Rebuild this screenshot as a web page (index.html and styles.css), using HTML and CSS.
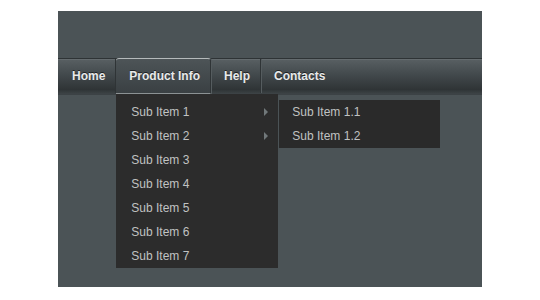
FILE: index.html
```html
<!DOCTYPE html>
<html lang="en">
<head>
    <meta charset="UTF-8">
    <title>Dropdown Menu</title>
    <link rel="stylesheet" href="styles.css">
</head>
<body>
    <div class="panel">
        <div class="top"></div>
        <ul class="nav">
            <li class="nav-item first"><a href="#">Home</a></li>
            <li class="nav-item active">
                <a href="#">Product Info</a>
                <ul class="sub">
                    <li class="has-sub">
                        <a href="#">Sub Item 1</a>
                        <ul class="sub sub-2">
                            <li><a href="#">Sub Item 1.1</a></li>
                            <li><a href="#">Sub Item 1.2</a></li>
                        </ul>
                    </li>
                    <li class="has-sub"><a href="#">Sub Item 2</a></li>
                    <li><a href="#">Sub Item 3</a></li>
                    <li><a href="#">Sub Item 4</a></li>
                    <li><a href="#">Sub Item 5</a></li>
                    <li><a href="#">Sub Item 6</a></li>
                    <li><a href="#">Sub Item 7</a></li>
                </ul>
            </li>
            <li class="nav-item"><a href="#">Help</a></li>
            <li class="nav-item last"><a href="#">Contacts</a></li>
        </ul>
    </div>
</body>
</html>
```

FILE: styles.css
```css
* {
    margin: 0;
    padding: 0;
    box-sizing: border-box;
}

body {
    background: #fff;
    font-family: "Liberation Sans", Arial, sans-serif;
    padding-top: 11px;
}

ul {
    list-style: none;
}

a {
    text-decoration: none;
}

.panel {
    width: 424px;
    height: 276px;
    margin-left: 58px;
    background: #4b5356;
}

.top {
    height: 47px;
}

.nav {
    display: flex;
    height: 37px;
    border-top: 1px solid #2e3335;
    border-bottom: 2px solid #3c4245;
    background: linear-gradient(#596063, #454c4f 40%, #2f3436 90%, #3a4042);
    box-shadow: inset 0 1px 0 #646b6e;
}

.nav-item {
    position: relative;
    display: flex;
    align-items: center;
    padding: 0 10px 0 13px;
    border-right: 1px solid #2f3436;
    box-shadow: 1px 0 0 #555c5f;
}

.nav-item.first {
    padding-left: 14px;
}

.nav-item.last {
    border-right: none;
    box-shadow: none;
}

.nav-item > a {
    color: #e8eaea;
    font-size: 12px;
    font-weight: bold;
    text-shadow: 0 -1px 0 #1e2224;
}

.nav-item.active {
    background: linear-gradient(#4d5457, #3a4043);
    border-top: 1px solid #b5babb;
    border-bottom: 1px solid #8c9294;
    border-radius: 3px 3px 0 0;
    margin-top: -1px;
    margin-bottom: -1px;
}

.sub {
    position: absolute;
    top: 35px;
    left: 0;
    width: 162px;
    padding: 6px 0 0;
    background: #2c2c2c;
}

.sub li {
    position: relative;
}

.sub a {
    display: block;
    height: 24px;
    line-height: 24px;
    padding-left: 15px;
    color: #c0c2c2;
    font-size: 12px;
}

.has-sub > a::after {
    content: "";
    position: absolute;
    right: 10px;
    top: 8px;
    border-left: 4px solid #71787a;
    border-top: 4px solid transparent;
    border-bottom: 4px solid transparent;
}

.sub .sub-2 {
    top: 0;
    left: 163px;
    width: 161px;
    padding: 0;
    background: #2a2a2a;
}

.sub-2 a {
    padding-left: 13px;
}
```
